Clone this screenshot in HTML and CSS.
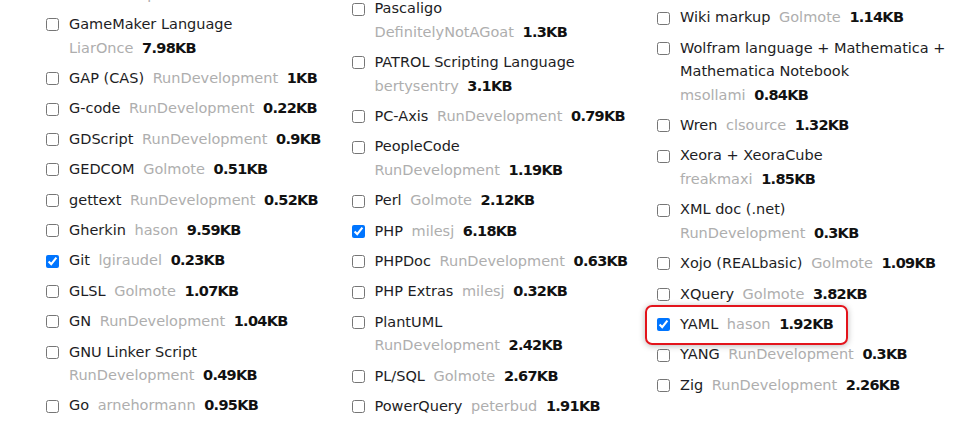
FILE: index.html
```html
<!DOCTYPE html>
<html lang="en">
  <head>
    <meta charset="UTF-8" />
    <meta name="viewport" content="width=device-width, initial-scale=1.0" />
    <title>Languages</title>
    <link rel="stylesheet" href="styles.css">
  </head>
  <body>
    <div class="languages">
      <ul class="col col-1">
        <li class="wrap"><label><input type="checkbox" /><span class="txt">FreeMarker Template Language <span class="meta"><span class="owner">RunDevelopment</span> <b>2.18KB</b></span></span></label></li>
        <li class="wrap"><label><input type="checkbox" /><span class="txt">GameMaker Language <span class="meta"><span class="owner">LiarOnce</span> <b>7.98KB</b></span></span></label></li>
        <li><label><input type="checkbox" /><span class="txt">GAP (CAS) <span class="meta"><span class="owner">RunDevelopment</span> <b>1KB</b></span></span></label></li>
        <li><label><input type="checkbox" /><span class="txt">G-code <span class="meta"><span class="owner">RunDevelopment</span> <b>0.22KB</b></span></span></label></li>
        <li><label><input type="checkbox" /><span class="txt">GDScript <span class="meta"><span class="owner">RunDevelopment</span> <b>0.9KB</b></span></span></label></li>
        <li><label><input type="checkbox" /><span class="txt">GEDCOM <span class="meta"><span class="owner">Golmote</span> <b>0.51KB</b></span></span></label></li>
        <li><label><input type="checkbox" /><span class="txt">gettext <span class="meta"><span class="owner">RunDevelopment</span> <b>0.52KB</b></span></span></label></li>
        <li><label><input type="checkbox" /><span class="txt">Gherkin <span class="meta"><span class="owner">hason</span> <b>9.59KB</b></span></span></label></li>
        <li><label><input type="checkbox" checked /><span class="txt">Git <span class="meta"><span class="owner">lgiraudel</span> <b>0.23KB</b></span></span></label></li>
        <li><label><input type="checkbox" /><span class="txt">GLSL <span class="meta"><span class="owner">Golmote</span> <b>1.07KB</b></span></span></label></li>
        <li><label><input type="checkbox" /><span class="txt">GN <span class="meta"><span class="owner">RunDevelopment</span> <b>1.04KB</b></span></span></label></li>
        <li class="wrap"><label><input type="checkbox" /><span class="txt">GNU Linker Script <span class="meta"><span class="owner">RunDevelopment</span> <b>0.49KB</b></span></span></label></li>
        <li><label><input type="checkbox" /><span class="txt">Go <span class="meta"><span class="owner">arnehormann</span> <b>0.95KB</b></span></span></label></li>
      </ul>
      <ul class="col col-2">
        <li class="wrap"><label><input type="checkbox" /><span class="txt">Pascaligo <span class="meta"><span class="owner">DefinitelyNotAGoat</span> <b>1.3KB</b></span></span></label></li>
        <li class="wrap"><label><input type="checkbox" /><span class="txt">PATROL Scripting Language <span class="meta"><span class="owner">bertysentry</span> <b>3.1KB</b></span></span></label></li>
        <li><label><input type="checkbox" /><span class="txt">PC-Axis <span class="meta"><span class="owner">RunDevelopment</span> <b>0.79KB</b></span></span></label></li>
        <li class="wrap"><label><input type="checkbox" /><span class="txt">PeopleCode <span class="meta"><span class="owner">RunDevelopment</span> <b>1.19KB</b></span></span></label></li>
        <li><label><input type="checkbox" /><span class="txt">Perl <span class="meta"><span class="owner">Golmote</span> <b>2.12KB</b></span></span></label></li>
        <li><label><input type="checkbox" checked /><span class="txt">PHP <span class="meta"><span class="owner">milesj</span> <b>6.18KB</b></span></span></label></li>
        <li><label><input type="checkbox" /><span class="txt">PHPDoc <span class="meta"><span class="owner">RunDevelopment</span> <b>0.63KB</b></span></span></label></li>
        <li><label><input type="checkbox" /><span class="txt">PHP Extras <span class="meta"><span class="owner">milesj</span> <b>0.32KB</b></span></span></label></li>
        <li class="wrap"><label><input type="checkbox" /><span class="txt">PlantUML <span class="meta"><span class="owner">RunDevelopment</span> <b>2.42KB</b></span></span></label></li>
        <li><label><input type="checkbox" /><span class="txt">PL/SQL <span class="meta"><span class="owner">Golmote</span> <b>2.67KB</b></span></span></label></li>
        <li><label><input type="checkbox" /><span class="txt">PowerQuery <span class="meta"><span class="owner">peterbud</span> <b>1.91KB</b></span></span></label></li>
      </ul>
      <ul class="col col-3">
        <li><label><input type="checkbox" /><span class="txt">Wiki markup <span class="meta"><span class="owner">Golmote</span> <b>1.14KB</b></span></span></label></li>
        <li class="wrap"><label><input type="checkbox" /><span class="txt">Wolfram language + Mathematica + Mathematica Notebook <span class="meta"><span class="owner">msollami</span> <b>0.84KB</b></span></span></label></li>
        <li><label><input type="checkbox" /><span class="txt">Wren <span class="meta"><span class="owner">clsource</span> <b>1.32KB</b></span></span></label></li>
        <li class="wrap"><label><input type="checkbox" /><span class="txt">Xeora + XeoraCube <span class="meta"><span class="owner">freakmaxi</span> <b>1.85KB</b></span></span></label></li>
        <li class="wrap"><label><input type="checkbox" /><span class="txt">XML doc (.net) <span class="meta"><span class="owner">RunDevelopment</span> <b>0.3KB</b></span></span></label></li>
        <li><label><input type="checkbox" /><span class="txt">Xojo (REALbasic) <span class="meta"><span class="owner">Golmote</span> <b>1.09KB</b></span></span></label></li>
        <li><label><input type="checkbox" /><span class="txt">XQuery <span class="meta"><span class="owner">Golmote</span> <b>3.82KB</b></span></span></label></li>
        <li class="marked"><label><input type="checkbox" checked /><span class="txt">YAML <span class="meta"><span class="owner">hason</span> <b>1.92KB</b></span></span></label></li>
        <li><label><input type="checkbox" /><span class="txt">YANG <span class="meta"><span class="owner">RunDevelopment</span> <b>0.3KB</b></span></span></label></li>
        <li><label><input type="checkbox" /><span class="txt">Zig <span class="meta"><span class="owner">RunDevelopment</span> <b>2.26KB</b></span></span></label></li>
      </ul>
    </div>
  </body>
</html>
```

FILE: styles.css
```css
html,
body {
  margin: 0;
  background-color: #fff;
  overflow: hidden;
}
body {
  font-family: "DejaVu Sans", sans-serif;
  font-size: 14.5px;
  color: #1d1d24;
}
.languages {
  display: grid;
  grid-template-columns: repeat(3, 305.5px);
  align-items: start;
  padding-left: 42px;
  margin-top: -40.75px;
}
.col {
  list-style: none;
  margin: 0;
  padding: 0;
}
.col-2 {
  padding-top: 38px;
}
.col-3 {
  padding-top: 47px;
}
.col li {
  margin-bottom: 6.9px;
  line-height: 23.5px;
}
.col label {
  display: flex;
  align-items: flex-start;
  padding-right: 4px;
}
.col input {
  flex: none;
  width: 13px;
  height: 13px;
  margin: 5.25px 10px 0 4px;
}
.txt {
  flex: 1;
}
.meta {
  display: inline-block;
  white-space: nowrap;
  margin-left: 4px;
}
.wrap .meta {
  display: block;
  margin-left: 0;
}
.owner {
  color: #aeaeae;
  margin-right: 4px;
}
.meta b {
  font-weight: 600;
  color: #111;
  letter-spacing: -0.7px;
}

/* annotation round the YAML row */
.marked {
  position: relative;
}
.marked::after {
  content: "";
  position: absolute;
  left: -8px;
  top: -7.5px;
  width: 199px;
  height: 35.5px;
  border: 2px solid #e3141c;
  border-radius: 7px;
  box-shadow: 0 1px 6px rgba(0, 0, 0, 0.28);
  pointer-events: none;
}
```
